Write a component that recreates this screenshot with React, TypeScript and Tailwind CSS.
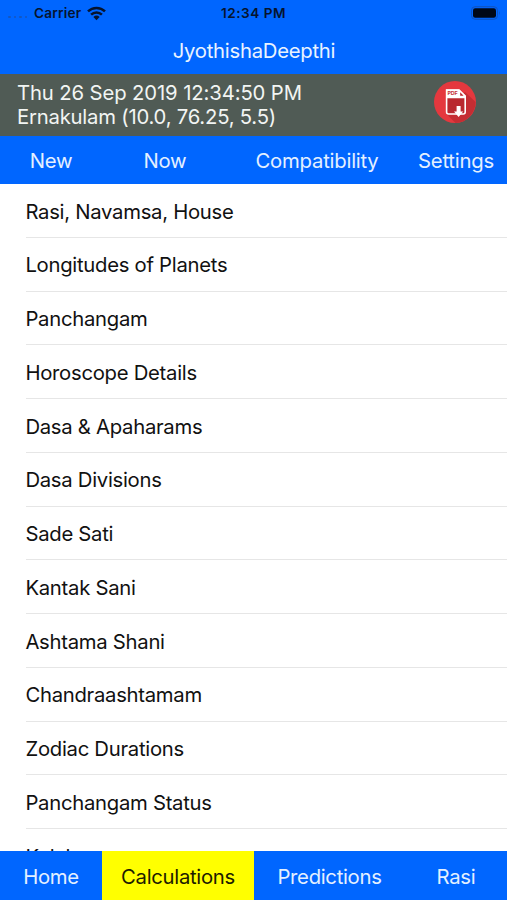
const rows = [
  "Rasi, Navamsa, House",
  "Longitudes of Planets",
  "Panchangam",
  "Horoscope Details",
  "Dasa & Apaharams",
  "Dasa Divisions",
  "Sade Sati",
  "Kantak Sani",
  "Ashtama Shani",
  "Chandraashtamam",
  "Zodiac Durations",
  "Panchangam Status",
  "Kalahora",
];

function PdfIcon() {
  return (
    <svg className="mb-[5px]" width="42" height="42" viewBox="0 0 42 42">
      <circle cx="21" cy="21" r="21" fill="#e5383e" />
      <path d="M31 11 L41.6 21 A21 21 0 0 1 21.5 42 L12 32.5 Z" fill="#c52d33" />
      <path d="M12.6 9 h12.4 l6.2 6.2 v15.8 a2 2 0 0 1-2 2 h-14.6 a2 2 0 0 1-2-2 z" fill="#b9282f" stroke="#fff" strokeWidth="1.6" />
      <path d="M12 8.4 h13.2 l6.4 6.4 v2.4 h-19.6 z" fill="#fff" />
      <path d="M26.2 11.2 l3.4 3.6 h-3.4 z" fill="#b9282f" />
      <text x="13.6" y="14.4" fontSize="5.4" fontWeight="700" fontFamily="Inter, sans-serif" fill="#c4353a">PDF</text>
      <path d="M22.6 25 h4 v5.4 h2.6 l-4.6 5.6 -4.6-5.6 h2.6 z" fill="#fff" />
    </svg>
  );
}

export default function App() {
  return (
    <div className="flex h-[900px] w-[507px] flex-col overflow-hidden whitespace-nowrap bg-white font-['Inter',sans-serif] text-[20.3px] tracking-[-0.3px] text-[#111]">
      <header className="h-[74px] shrink-0 bg-[#0066ff]">
        <div className="grid h-[26px] grid-cols-3 items-center text-[13.6px] font-semibold leading-[26px] tracking-[0.2px] text-[#06142e]">
          <div className="flex items-center pl-2">
            <div className="mt-2 flex w-[26px] gap-[3px]">
              {[0, 1, 2, 3].map((i) => (
                <span key={i} className="size-[2.5px] rounded-full bg-[#1457bf]" />
              ))}
            </div>
            <span>Carrier</span>
            <svg className="ml-1.5" width="19" height="15" viewBox="0 0 19 15" fill="none" stroke="#06142e" strokeWidth="2.5">
              <path d="M1 5.4 A12.2 12.2 0 0 1 18 5.4" />
              <path d="M4.1 8.7 A7.7 7.7 0 0 1 14.9 8.7" />
              <path d="M9.5 14.2 L6.4 11 A4.5 4.5 0 0 1 12.6 11 Z" fill="#06142e" stroke="none" />
            </svg>
          </div>
          <span className="text-center tracking-[0.5px]">12:34 PM</span>
          <svg className="mr-[6px] justify-self-end" width="30" height="14" viewBox="0 0 30 14">
            <rect x="0.5" y="0.7" width="26" height="12.6" rx="3.6" fill="none" stroke="#1053bd" />
            <rect x="2" y="2.2" width="23" height="9.6" rx="2.2" fill="#000818" />
            <path d="M28 4.8 q1.6 2.2 0 4.4 z" fill="#1053bd" />
          </svg>
        </div>
        <h1 className="pl-px text-center leading-[49px] tracking-[-0.26px] text-[#e9f3ff]">JyothishaDeepthi</h1>
      </header>
      <section className="flex h-[61.5px] shrink-0 items-center justify-between bg-[#505b55] pl-[17px] pr-[31px] leading-[24.5px] text-[#f2f5f3]">
        <div className="pt-px">
          <p className="tracking-[-0.12px]">Thu 26 Sep 2019 12:34:50 PM</p>
          <p className="tracking-[-0.22px]">Ernakulam (10.0, 76.25, 5.5)</p>
        </div>
        <PdfIcon />
      </section>
      <nav className="grid h-[48.5px] shrink-0 grid-cols-[102px_126px_178px_100px] items-center bg-[#0066ff] pt-[2px] text-center tracking-[-0.22px] text-[#e4f0ff]">
        <span>New</span>
        <span>Now</span>
        <span>Compatibility</span>
        <span>Settings</span>
      </nav>
      <main className="min-h-0 flex-1 overflow-hidden">
        {rows.map((label) => (
          <div key={label} className="ml-[26px] flex h-[53.75px] items-center border-b border-[#e6e6e6] pt-[3px]">
            <span className="-ml-[0.6px] tracking-[-0.28px]">{label}</span>
          </div>
        ))}
      </main>
      <footer className="grid h-[49px] shrink-0 grid-cols-[102px_152px_151px_102px] bg-[#0066ff] text-center leading-[51px] text-[#e4f0ff]">
        <span>Home</span>
        <span className="bg-[#ffff00] text-[#1c1c00]">Calculations</span>
        <span>Predictions</span>
        <span>Rasi</span>
      </footer>
    </div>
  );
}
